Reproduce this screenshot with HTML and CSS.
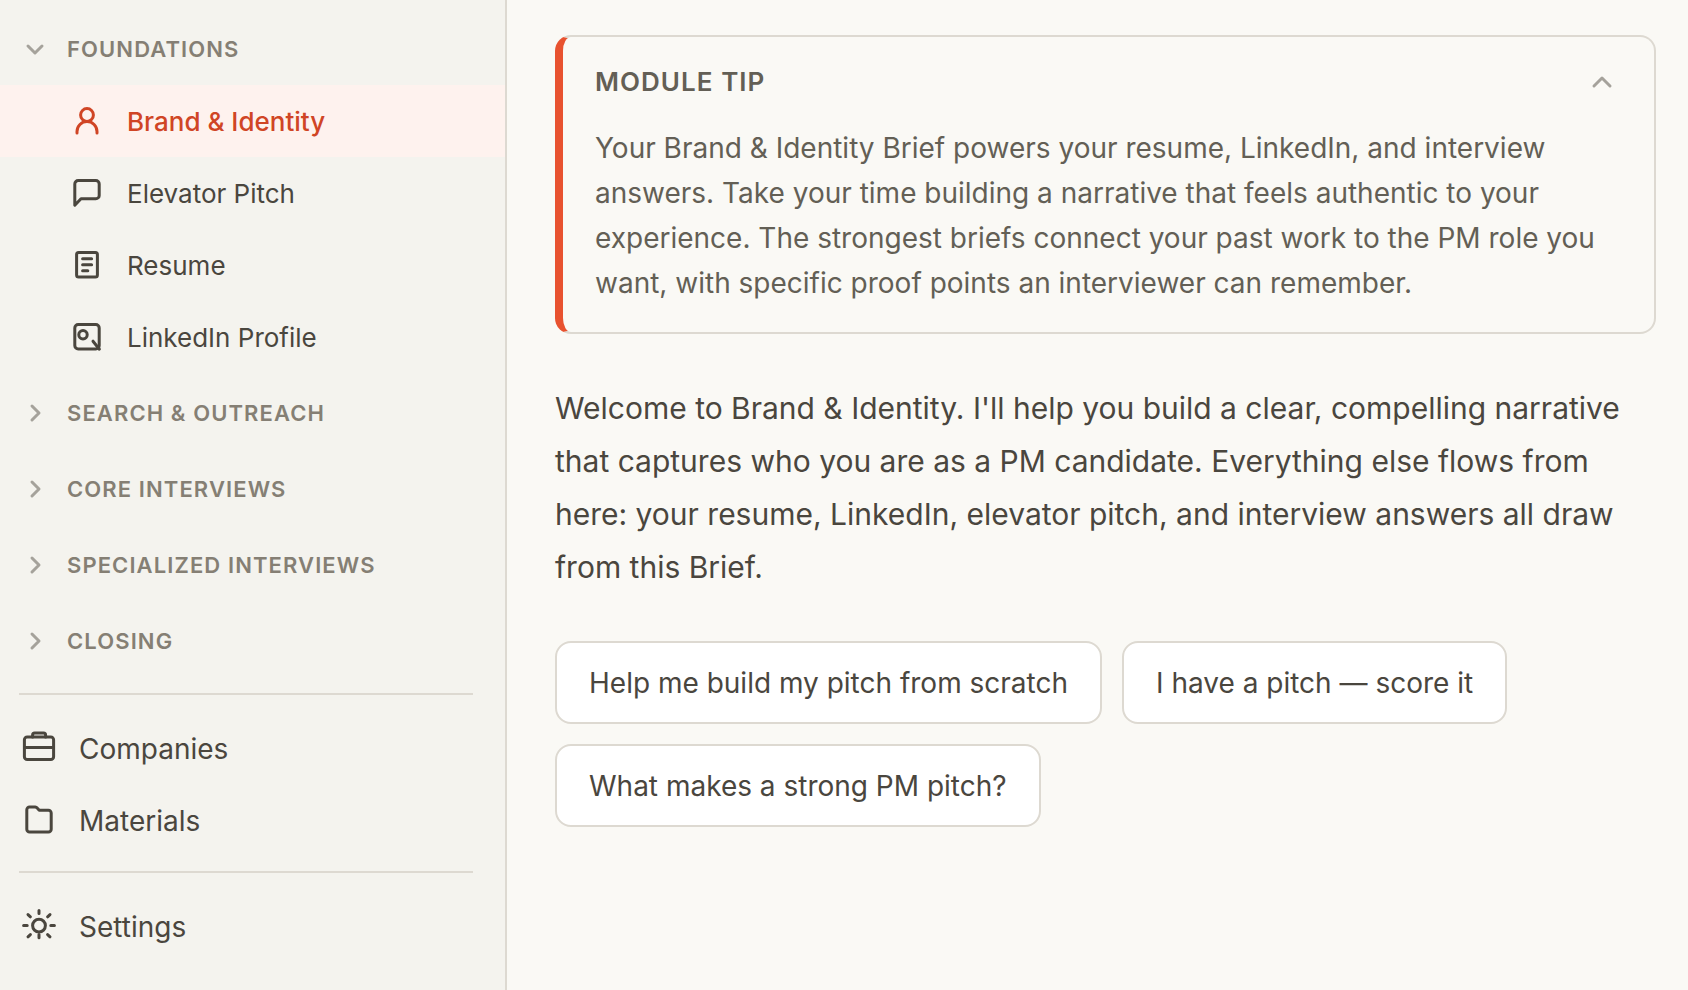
FILE: index.html
```html
<!DOCTYPE html>
<html lang="en">
<head>
    <meta charset="UTF-8">
    <meta name="viewport" content="width=device-width, initial-scale=1.0">
    <title>Brand &amp; Identity</title>
    <link rel="stylesheet" href="styles.css">
</head>
<body>

    <div class="layout">
        <nav class="sidebar">
            <div class="section">
                <button class="section-btn" aria-expanded="true">
                    <svg class="chevron" viewBox="0 0 24 24"><path d="M5 9l7 7 7-7"/></svg>
                    Foundations
                </button>
                <a class="module active" href="#brand">
                    <svg class="icon" viewBox="0 0 16 16"><circle cx="8" cy="5" r="3.2"/><path d="M3 14v-.7a5 5 0 0 1 10 0v.7"/></svg>
                    Brand &amp; Identity
                </a>
                <a class="module" href="#pitch">
                    <svg class="icon" viewBox="0 0 16 16"><path d="M1.9 14.1V3.5a1.7 1.7 0 0 1 1.7-1.7h8.8a1.7 1.7 0 0 1 1.7 1.7v5.7a1.7 1.7 0 0 1-1.7 1.7H5z"/></svg>
                    Elevator Pitch
                </a>
                <a class="module" href="#resume">
                    <svg class="icon" viewBox="0 0 16 16"><rect x="2.8" y="1.8" width="10.4" height="12.2" rx="1"/><path d="M5.8 4.9h4.5M5.8 7.9h4.5M5.8 10.9h2.6"/></svg>
                    Resume
                </a>
                <a class="module" href="#linkedin">
                    <svg class="icon" viewBox="0 0 16 16"><rect x="1.9" y="1.8" width="12.2" height="12.2" rx="1.7"/><circle cx="6" cy="6.9" r="2.1"/><path d="M11 10.1l3.2 4"/></svg>
                    LinkedIn Profile
                </a>
            </div>
            <div class="section">
                <button class="section-btn" aria-expanded="false">
                    <svg class="chevron" viewBox="0 0 24 24"><path d="M9 5l7 7-7 7"/></svg>
                    Search &amp; Outreach
                </button>
            </div>
            <div class="section">
                <button class="section-btn" aria-expanded="false">
                    <svg class="chevron" viewBox="0 0 24 24"><path d="M9 5l7 7-7 7"/></svg>
                    Core Interviews
                </button>
            </div>
            <div class="section">
                <button class="section-btn" aria-expanded="false">
                    <svg class="chevron" viewBox="0 0 24 24"><path d="M9 5l7 7-7 7"/></svg>
                    Specialized Interviews
                </button>
            </div>
            <div class="section">
                <button class="section-btn" aria-expanded="false">
                    <svg class="chevron" viewBox="0 0 24 24"><path d="M9 5l7 7-7 7"/></svg>
                    Closing
                </button>
            </div>

            <div class="links">
                <a class="link" href="#companies">
                    <svg class="icon-lg" viewBox="0 0 18 18"><rect x="1.7" y="3" width="14.6" height="11.3" rx="1.4"/><path d="M5.8 3V2a1 1 0 0 1 1-1h4.5a1 1 0 0 1 1 1v1M1.7 8.3h14.6"/></svg>
                    Companies
                </a>
                <a class="link" href="#materials">
                    <svg class="icon-lg" viewBox="0 0 18 18"><path d="M2.9 3.4A1.4 1.4 0 0 1 4.3 2h2.8a1.4 1.4 0 0 1 1 .5l1 1.1h4.6a1.4 1.4 0 0 1 1.4 1.4v8.1a1.4 1.4 0 0 1-1.4 1.4H4.3a1.4 1.4 0 0 1-1.4-1.4z"/></svg>
                    Materials
                </a>
            </div>
            <div class="links">
                <a class="link" href="#settings">
                    <svg class="icon-lg" viewBox="0 0 18 18"><circle cx="9" cy="8.3" r="3.2"/><path d="M9 .8v1.5M9 12.8v1.6M1.3 8.3h1.8M14.9 8.3h1.8M3.5 2.8l1.2 1.1M13.3 12.8l1.2 1.1M3.5 13.9l1.2-1.1M13.3 3.9l1.2-1.1"/></svg>
                    Settings
                </a>
            </div>
        </nav>

        <main class="content">
            <section class="tip">
                <div class="tip-header">
                    <h2>Module Tip</h2>
                    <button class="tip-toggle" aria-label="Collapse tip">
                        <svg class="chevron-up" viewBox="0 0 28 28"><path d="M6 18l8-8 8 8"/></svg>
                    </button>
                </div>
                <p>Your Brand &amp; Identity Brief powers your resume, LinkedIn, and interview answers. Take your time building a narrative that feels authentic to your experience. The strongest briefs connect your past work to the PM role you want, with specific proof points an interviewer can remember.</p>
            </section>

            <p class="welcome">Welcome to Brand &amp; Identity. I'll help you build a clear, compelling narrative that captures who you are as a PM candidate. Everything else flows from here: your resume, LinkedIn, elevator pitch, and interview answers all draw from this Brief.</p>

            <div class="prompts">
                <button class="prompt">Help me build my pitch from scratch</button>
                <button class="prompt">I have a pitch — score it</button>
                <button class="prompt">What makes a strong PM pitch?</button>
            </div>
        </main>
    </div>

</body>
</html>
```
FILE: styles.css
```css
* {
    box-sizing: border-box;
}
body {
    margin: 0;
    font-family: Inter, sans-serif;
    font-optical-sizing: none;
    background: #faf9f5;
    color: #4a463e;
}
button {
    font-family: inherit;
    cursor: pointer;
}
svg {
    flex-shrink: 0;
    fill: none;
    stroke: currentColor;
    stroke-linecap: round;
    stroke-linejoin: round;
}
.layout {
    display: flex;
    min-height: 100vh;
}

/* Sidebar */
.sidebar {
    flex: 0 0 507px;
    padding-top: 13px;
    background: #f4f3ee;
    border-right: 2px solid #ddd9d1;
}
.section {
    margin-bottom: 4px;
}
.section-btn {
    display: flex;
    align-items: center;
    gap: 20px;
    width: 100%;
    height: 72px;
    padding: 0 23px;
    border: none;
    background: none;
    color: #857f74;
    font-size: 22px;
    font-weight: 600;
    letter-spacing: 0.05em;
    text-transform: uppercase;
}
.chevron {
    width: 24px;
    height: 24px;
    color: #a5a29b;
    stroke-width: 3;
}
.module {
    display: flex;
    align-items: center;
    gap: 24px;
    height: 72px;
    padding: 0 32px 0 71px;
    color: #4a463e;
    font-size: 26px;
    text-decoration: none;
}
.module.active {
    background: #fef2ee;
    color: #d04525;
    font-weight: 500;
}
.icon {
    width: 32px;
    height: 32px;
    stroke-width: 1.5;
}
.links {
    margin: 16px 32px 0 19px;
    padding-top: 16px;
    border-top: 2px solid #ddd9d1;
}
.link {
    display: flex;
    align-items: center;
    gap: 22px;
    height: 72px;
    padding: 3px 0 0 2px;
    color: #4a463e;
    font-size: 28px;
    text-decoration: none;
}
.icon-lg {
    width: 36px;
    height: 36px;
    stroke-width: 1.5;
}

/* Main content */
.content {
    flex: 1;
    padding: 35px 32px 35px 48px;
}
.tip {
    padding: 29px 38px 26px 32px;
    border: 2px solid #ddd9d1;
    border-left: 8px solid #e8522f;
    border-radius: 16px;
    color: #635f55;
}
.tip-header {
    display: flex;
    align-items: center;
    justify-content: space-between;
    margin-bottom: 28px;
}
.tip-header h2 {
    margin: 0;
    font-size: 26px;
    font-weight: 600;
    line-height: 32px;
    letter-spacing: 0.04em;
    text-transform: uppercase;
}
.tip-toggle {
    display: flex;
    padding: 0;
    border: none;
    background: none;
    color: #a5a29b;
}
.chevron-up {
    width: 28px;
    height: 28px;
    stroke-width: 3;
}
.tip p {
    margin: 0;
    font-size: 28px;
    line-height: 45px;
}
.welcome {
    margin: 48px 0 47px;
    font-size: 30px;
    line-height: 53px;
}
.prompts {
    display: flex;
    flex-wrap: wrap;
    gap: 20px;
}
.prompt {
    padding: 21px 32px 19px;
    border: 2px solid #ddd9d1;
    border-radius: 16px;
    background: #fff;
    color: #4a463e;
    font-size: 28px;
    line-height: 39px;
}
```
